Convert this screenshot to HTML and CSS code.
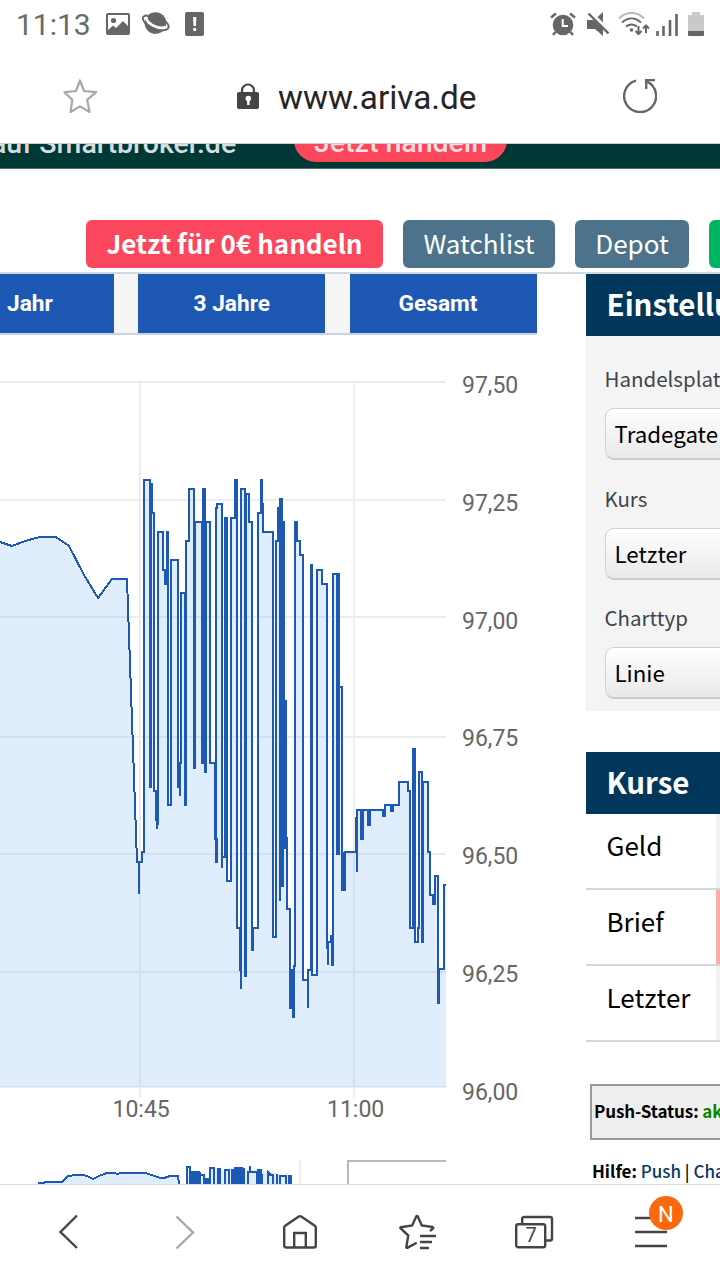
FILE: index.html
```html
<!DOCTYPE html>
<html lang="de">

<head>
    <meta charset="UTF-8">
    <meta name="viewport" content="width=device-width, initial-scale=1.0">
    <title>www.ariva.de</title>
    <link rel="stylesheet" href="styles.css">
</head>

<body>
    <header class="status">
        <span class="time">11:13</span>
        <svg class="ico-image" width="24" height="22" viewBox="0 0 24 22">
            <rect x="1" y="1" width="22" height="20" rx="1" fill="none" stroke="#666" stroke-width="2"/>
            <circle cx="7.500" cy="7.500" r="2.600" fill="#666"/>
            <path d="M2 17l5-4.500 3 2.500 7-7 6 6v7H2z" fill="#666"/>
        </svg>
        <svg class="ico-planet" width="28" height="24" viewBox="0 0 28 24">
            <circle cx="13.500" cy="12" r="10.800" fill="#666"/>
            <path d="M4.500 5.500C3 10 9 14.500 14 16.500c5 1.800 9 1.500 10.500-.5" fill="none" stroke="#fff" stroke-width="2.400"/>
            <path d="M5.500 4.500C-1.500 4-.5 11 8 15.500c9 5 20 5.500 18.500-1-.5-1.500-1.500-3-3-4" fill="none" stroke="#666" stroke-width="1.900"/>
            <path d="M4.500 6C4 10 9 13.500 14 15.500c5 1.500 8 1.500 9.500 0" fill="none" stroke="#fff" stroke-width="2"/>
        </svg>
        <svg class="ico-alert" width="19" height="24" viewBox="0 0 19 24">
            <rect width="19" height="24" rx="2" fill="#666"/>
            <path d="M8 5h3.400l-.5 9H8.500z" fill="#fff"/>
            <circle cx="9.700" cy="17.500" r="1.700" fill="#fff"/>
        </svg>
        <div class="status-right">
            <svg width="26" height="24" viewBox="0 0 26 24">
                <circle cx="13" cy="13" r="10.300" fill="#666"/>
                <path d="M1 5.500l5-4M25 5.500l-5-4M5.500 20L3 23M20.500 20l2.500 3" stroke="#666" stroke-width="2.400"/>
                <path d="M12.700 7v7H18" fill="none" stroke="#fff" stroke-width="2"/>
            </svg>
            <svg class="ico-mute" width="22" height="24" viewBox="0 0 22 24">
                <path d="M0 8h7l9 9v7l-8-7H0zM10.500 5L16 0v10.500z" fill="#666"/>
                <path d="M1.500 1.500l20 20" stroke="#666" stroke-width="2.400"/>
            </svg>
            <svg class="ico-wifi" width="32" height="24" viewBox="0 0 32 24">
                <g fill="none" stroke="#666" stroke-width="2">
                    <path d="M1 6.500C8-1 19-1 26 6.500" stroke="#bbb"/>
                    <path d="M4 10.500c6-5.500 13-5.500 19 0M8 14.500c4-3 7-3 11 0"/>
                    <path d="M20.500 14v7.500M17.500 19l3 3 3-3M28 21v-7.500M25 16.500l3-3 3 3"/>
                </g>
                <circle cx="13.500" cy="18" r="1.800" fill="#666"/>
            </svg>
            <svg class="ico-signal" width="22" height="24" viewBox="0 0 22 24">
                <path d="M1.500 19v5M7.500 14v10M14 8v16M20.500 2v22" stroke="#666" stroke-width="2.600"/>
            </svg>
            <svg class="ico-battery" width="16" height="24" viewBox="0 0 16 24">
                <path d="M4 0h8v3h4v17H0V3h4z" fill="#c9c9c9"/>
                <path d="M0 19h16v4q0 1-1 1H1q-1 0-1-1z" fill="#666"/>
            </svg>
        </div>
    </header>

    <div class="urlbar">
        <svg width="34" height="34" viewBox="0 0 34 34">
            <path d="M17 1.500l4 10.500 12 1.200-8.800 7.600L26.500 33 17 27.400 7.500 33l1.800-12.200L1.500 13.200 13 12z" fill="none" stroke="#a8a8a8" stroke-width="2.200" stroke-linejoin="round"/>
        </svg>
        <div class="address">
            <svg width="22" height="26" viewBox="0 0 22 26">
                <path d="M5 11V7.500a6 6 0 0 1 12 0V11" fill="none" stroke="#444" stroke-width="2.200"/>
                <rect y="9" width="22" height="17" rx="2" fill="#444"/>
                <circle cx="11.300" cy="15.500" r="2.800" fill="#fff"/>
                <path d="M11.300 16v6" stroke="#fff" stroke-width="2.400"/>
            </svg>
            <span>www.ariva.de</span>
        </div>
        <svg class="reload" width="34" height="34" viewBox="0 0 34 34">
            <path d="M13 1.600A16 16 0 1 0 24 2.600" fill="none" stroke="#666" stroke-width="2.400"/>
            <path d="M32 1H23.200V10" fill="none" stroke="#666" stroke-width="2.400"/>
        </svg>
    </div>

    <main class="page">
        <div class="banner">
            <span class="banner-text">auf Smartbroker.de</span>
            <span class="banner-btn">Jetzt handeln</span>
        </div>

        <div class="actions">
            <a class="btn btn-red">Jetzt für 0€ handeln</a>
            <a class="btn btn-watch">Watchlist</a>
            <a class="btn btn-depot">Depot</a>
            <a class="btn btn-green"></a>
        </div>

        <div class="content">
            <section class="chart-col">
                <div class="tabs">
                    <span class="tab tab-cut">Jahr</span>
                    <span class="tab">3 Jahre</span>
                    <span class="tab tab-last">Gesamt</span>
                </div>
                <svg class="chart" width="537" height="849" viewBox="0 335 537 849">
                    <!-- grid -->
                    <g class="grid">
                        <path d="M0 382H446M0 500H446M0 617H446M0 737H446M0 854H446M0 972H446M0 1087H446"/>
                        <path d="M140 381V1098M354 381V1098"/>
                    </g>
                    <!-- price -->
                    <path class="area" d="M0 542L12 546 25 541 40 537H56L69 546 84 575 98 598 112 579H127L137 862H139V894V862H142V852H144V480H150V786H151V484H152V513H154V791H156V820H157V829V824H158V532H163V570H165V584H166V532H168V805H170V560H178V787H180V796V763H181V593H185V805H186V541H189V489H194V768H195V522H202V763H203V489H205V772H206V522H210V763H215V839H217V862H216V508H217V504H222V868V857H225V518H227V881H231V518H235V480H237V862H237V928H240V970H241V989V489H245V976H246V494H249V522H252V950H253V928H258V513H261V480H262V504H263V532H273V937H276V541H278V508H280V901V499H282V886H283V522H284V848H285V814H286V848H287V837H288V909H290V1008H292V969H293V1017H294V966H295V522H297V541H300V555H303V980V936V980H308V1008V970H311V565H312V975H317V570H322V584H327V948H328V965V942H331V936H332V965H333V574H337V854H338V687H342V890H345V852H356V818H357V872V810H361V839H363V810H368V825H370V810H383V816H385V805H391V811H393V805H399V782H408V791H410V928H413V749H415V928H415V942H418V928H419V772H422V942H423V782H428V852H430V895H433V904H435V876V876H438V1003H439V969H444V885H446V1087H0Z"/>
                    <path class="line" d="M0 542L12 546 25 541 40 537H56L69 546 84 575 98 598 112 579H127L137 862H139V894V862H142V852H144V480H150V787H151V484H152V513H154V791H156V820H157V829V824H158V532H163V570H165V584H167V532H168V805H171V560H178V787H180V796V763H181V593H185V805H186V541H189V489H194V768H195V522H202V763H203V489H205V772H206V522H210V763H215V839H217V862H216V508H217V504H222V868V857H225V518H227V881H231V518H235V480H237V928H240V970H241V989V489H245V976H246V494H249V522H252V950H253V928H258V513H261V480H262V504H263V532H273V937H276V541H278V508H279V541H280V901V499H282V886H283V522H284V848H286V814V848H287V837V909H290V1008H292V969V1008H293V1017H294V966H295V522H297V541H300V555H303V980V936V980H308V1008V970H311V565H312V975H317V570H322V584H327V948H328V965V942H331V936H332V965H333V574H337V854H339V574H338V687H342V804V890H345V852H356V818H357V872V810H361V839H363V810H368V825H370V810H383V816H385V805H391V811H393V805H399V782H408V791H410V928H413V749H415V928V942H418V928H419V772H422V942H423V782H428V852H430V895H433V904H435V876H438V1003H439V969H444V885H446"/>
                    <path class="solid" d="M280 499h3v386h-3zM285 700h2v148h-2zM336 575h3v279h-3zM342 852h4v38h-4zM289 969h5v39h-5z"/>
                    <g class="axis">
                        <text x="462" y="393">97,50</text>
                        <text x="462" y="511">97,25</text>
                        <text x="462" y="629">97,00</text>
                        <text x="462" y="746">96,75</text>
                        <text x="462" y="864">96,50</text>
                        <text x="462" y="982">96,25</text>
                        <text x="462" y="1100">96,00</text>
                        <text x="112.500" y="1117">10:45</text>
                        <text x="327" y="1117">11:00</text>
                    </g>
                    <!-- navigator -->
                    <path class="area" d="M38 1184L46 1182H62L68 1176 76 1175H84L93 1179 107 1173H145L162 1178 170 1176H178V1184ZM187 1184V1167H190V1172H200V1175H206V1179H210V1168H220V1170H263V1172H272V1184ZM286 1176H292V1184H268V1171Z"/>
                    <path class="line" d="M38 1183H43L46 1182H62L68 1176 76 1175H84L89 1177 93 1179 99 1176 107 1173H114L118 1174 120 1173H145L155 1176 160 1178H164L170 1176H178L179 1184"/>
                    <path class="line" d="M187 1184V1167H190V1184H192V1172H194V1184H196V1172H198V1184H200V1172V1175H204V1184H206V1179H208V1184V1179H210V1184V1168H214V1184M218 1184V1169H220V1184M225 1184V1170H229V1184M232 1184V1170H234V1184H236V1168H238V1184H240V1168H242V1184V1169H244V1184M248 1184V1171M250 1166V1172H257V1184H259V1170H261V1184H262V1174M268 1184V1172L270 1174V1175H273V1184M277 1174V1184M280 1184V1176H286V1184M289 1175V1184H291V1175"/>
                    <path class="solid" d="M191 1171h9v13h-9zM206 1179h4v5h-4zM217 1168h4v16h-4zM234 1167h9v17h-9zM257 1169h5v15h-5zM288 1175h4v9h-4z"/>
                    <path class="grid" d="M300 1160V1184"/>
                    <path class="handle" d="M348 1184V1161H446"/>
                </svg>
            </section>

            <aside class="side">
                <h2 class="side-title">Einstellungen</h2>
                <div class="settings">
                    <label>Handelsplatz</label>
                    <div class="select">Tradegate</div>
                    <label>Kurs</label>
                    <div class="select">Letzter</div>
                    <label>Charttyp</label>
                    <div class="select">Linie</div>
                </div>

                <h2 class="side-title">Kurse</h2>
                <div class="quote"><span>Geld</span><i class="cell"></i></div>
                <div class="quote"><span>Brief</span><i class="cell cell-down"></i></div>
                <div class="quote"><span>Letzter</span><i class="cell"></i></div>

                <div class="push">Push-Status: <span class="on">aktiv</span></div>
                <div class="help"><b>Hilfe:</b> <a>Push</a> <span>|</span> <a>Chart</a></div>
            </aside>
        </div>
    </main>

    <nav class="bottom">
        <svg width="40" height="40" viewBox="0 0 40 40">
            <path d="M29 3.500L12.500 20 29 36"/>
        </svg>
        <svg class="disabled" width="40" height="40" viewBox="0 0 40 40">
            <path d="M12.500 4.500L29 20.500 12.500 36.500"/>
        </svg>
        <svg width="40" height="40" viewBox="0 0 40 40">
            <path d="M4.200 15.500q0-1 1-1.700L18.800 4.600q1.200-.8 2.400 0L34.800 13.800q1 .7 1 1.700V33.500q0 2-2 2H6.200q-2 0-2-2zM14.200 35V21H25.800V35"/>
        </svg>
        <svg width="40" height="40" viewBox="0 0 40 40">
            <path d="M34 19l3-2.500q.8-1.300-.7-1.500L25.800 13.500 21.800 4.500q-.8-1.300-1.600 0L16.200 13.500 5 15.200q-1.200.4-.3 1.300L12.300 23.500 10.300 35q.2 1.300 1.400.6L20.700 30.700M24 24H40M24 30H36M24 36H33"/>
        </svg>
        <svg width="40" height="40" viewBox="0 0 40 40">
            <rect x="4.200" y="12.200" width="29" height="23" rx="2"/>
            <path d="M10.200 12V7q0-2 2-2H38q2 0 2 2V26.500q0 2-2 2H34"/>
            <text x="13.500" y="30">7</text>
        </svg>
        <svg width="40" height="40" viewBox="0 0 40 40">
            <path d="M7 6H39M7 20H39M7 34H39"/>
            <circle class="badge" cx="38" cy="1" r="17"/>
            <text class="badge-text" x="30" y="9.500">N</text>
        </svg>
    </nav>
</body>

</html>
```

FILE: styles.css
```css
* {
    margin: 0;
    padding: 0;
    box-sizing: border-box;
}

body {
    width: 720px;
    height: 1280px;
    overflow: hidden;
    display: flex;
    flex-direction: column;
    background: #fff;
    font-family: "Noto Sans CJK SC", "Open Sans", sans-serif;
}

svg {
    display: block;
    flex-shrink: 0;
}

/* Android status bar */
.status {
    height: 48px;
    padding: 0 16px 0 16px;
    display: flex;
    align-items: center;
    font-family: Roboto, sans-serif;
}

.time {
    width: 90px;
    font-size: 30px;
    font-weight: 400;
    line-height: 48px;
    color: #6a6a6a;
    padding-top: 2px;
}

.ico-planet {
    margin-left: 12px;
    margin-top: -3px;
}

.ico-alert {
    margin-left: 15px;
}

.status-right {
    margin-left: auto;
    display: flex;
}

.ico-mute {
    margin-left: 11px;
}

.ico-wifi {
    margin-left: 9px;
}

.ico-signal {
    margin-left: 6px;
}

.ico-battery {
    margin-left: 10px;
}

/* Address bar */
.urlbar {
    height: 96px;
    padding: 0 63px;
    display: flex;
    align-items: center;
    border-bottom: 1px solid #ccc;
}

.address {
    display: flex;
    align-items: center;
    gap: 19px;
    margin-left: 140px;
    font-family: Roboto, sans-serif;
    font-size: 33.300px;
    line-height: 40px;
    color: #252525;
}

.address span {
    padding-top: 5px;
}

.reload {
    margin-left: auto;
}

/* Web page */
.page {
    height: 1040px;
    overflow: hidden;
}

.banner {
    height: 25px;
    overflow: hidden;
    display: flex;
    align-items: flex-end;
    background: #003836;
    border-bottom: 1px solid #4d7372;
    color: #d5dedd;
    font-family: Roboto, sans-serif;
    font-size: 28.500px;
    font-weight: 500;
}

.banner-text {
    width: 294px;
    line-height: 36px;
    margin-left: -9px;
    margin-right: 9px;
    padding-bottom: 6px;
    white-space: nowrap;
}

.banner-btn {
    width: 213px;
    height: 46px;
    line-height: 30px;
    margin-bottom: 6px;
    padding-top: 12px;
    border-radius: 22px;
    background: #fc465c;
    color: #ffdce0;
    text-align: center;
}

.actions {
    display: flex;
    gap: 20px;
    width: 900px;
    height: 105px;
    padding: 51px 0 0 86px;
    border-bottom: 2px solid #d0d9df;
}

.btn {
    height: 48px;
    border-radius: 6px;
    color: #fff;
    font-size: 26px;
    line-height: 46px;
    text-align: center;
    white-space: nowrap;
}

.btn-red {
    width: 297px;
    background: #fb475d;
    font-weight: 700;
}

.btn-watch {
    width: 152px;
    background: #4d738c;
}

.btn-depot {
    width: 114px;
    background: #4d738c;
}

.btn-green {
    width: 120px;
    background: #00b562;
}

.content {
    display: flex;
    width: 900px;
}

.chart-col {
    width: 537px;
}

.tabs {
    display: flex;
    justify-content: space-between;
    width: 536.500px;
    height: 61px;
    background: #f5f5f5;
    border-bottom: 2px solid #c9d5de;
    font-family: Roboto, sans-serif;
}

.tab {
    width: 187px;
    background: #1d59b4;
    color: #fff;
    font-size: 22.700px;
    font-weight: 700;
    line-height: 59px;
    text-align: center;
}

.tab-cut {
    width: 114px;
    padding-left: 7px;
    text-align: left;
}

.tab-last {
    padding-right: 10px;
}

/* Chart */
.grid {
    stroke: #ededed;
    stroke-width: 2;
    shape-rendering: crispEdges;
}

.area {
    fill: #78b2f2;
    fill-opacity: .23;
    shape-rendering: crispEdges;
}

.line {
    fill: none;
    stroke: #1d59b4;
    stroke-width: 2;
    shape-rendering: crispEdges;
}

.solid {
    fill: #1d59b4;
    shape-rendering: crispEdges;
}

.handle {
    fill: none;
    stroke: #b9b9b9;
    stroke-width: 2;
    shape-rendering: crispEdges;
}

.axis {
    fill: #666;
    font-family: Roboto, sans-serif;
    font-size: 23px;
}

/* Sidebar */
.side {
    width: 314px;
    margin-left: 49px;
}

.side-title {
    height: 62px;
    padding-left: 20.500px;
    background: #00375b;
    color: #fff;
    font-size: 29.500px;
    font-weight: 700;
    line-height: 59px;
}

.settings {
    height: 375px;
    margin-bottom: 41px;
    padding: 28px 0 0 18.500px;
    background: #f4f4f4;
}

.settings label {
    display: block;
    height: 44px;
    font-size: 20.500px;
    line-height: 28px;
    color: #40444b;
}

.select {
    height: 52px;
    margin-bottom: 23.500px;
    padding-left: 9px;
    border: 1px solid #d0d0d0;
    border-bottom: 2px solid #ccc;
    border-radius: 9px;
    background: linear-gradient(#fff, #e9e9e9);
    font-size: 22.300px;
    line-height: 48px;
    color: #000;
}

.quote {
    height: 76px;
    display: flex;
    border-bottom: 2px solid #cfd8df;
    font-size: 26px;
    line-height: 61px;
}

.quote span {
    width: 130px;
    padding-left: 20.500px;
}

.cell {
    flex: 1;
    background: #f3f3f3;
}

.cell-down {
    background: #fbaea4;
}

.push {
    height: 56px;
    margin: 42px 0 0 4px;
    padding-left: 2px;
    border: 2px solid #999;
    background: #eee;
    font-size: 17px;
    letter-spacing: -.1px;
    font-weight: 700;
    line-height: 50px;
}

.on {
    color: #080;
}

.help {
    margin: 14px 0 0 6px;
    font-size: 17px;
    font-weight: 500;
    line-height: 34px;
}

.help a {
    color: #0a3a60;
}

/* Browser toolbar */
.bottom {
    height: 96px;
    padding: 0 0 1px 48px;
    display: flex;
    align-items: center;
    gap: 76px;
    border-top: 1px solid #ddd;
    background: #fff;
    font-family: Roboto, sans-serif;
}

.bottom svg {
    overflow: visible;
    fill: none;
    stroke: #444;
    stroke-width: 2.400;
}

.bottom text {
    fill: #444;
    stroke: none;
    font-size: 20px;
}

.bottom .disabled {
    stroke: #a8a8a8;
}

.bottom .badge {
    fill: #f96a10;
    stroke: none;
}

.bottom .badge-text {
    fill: #fff;
    font-size: 22px;
}
```
